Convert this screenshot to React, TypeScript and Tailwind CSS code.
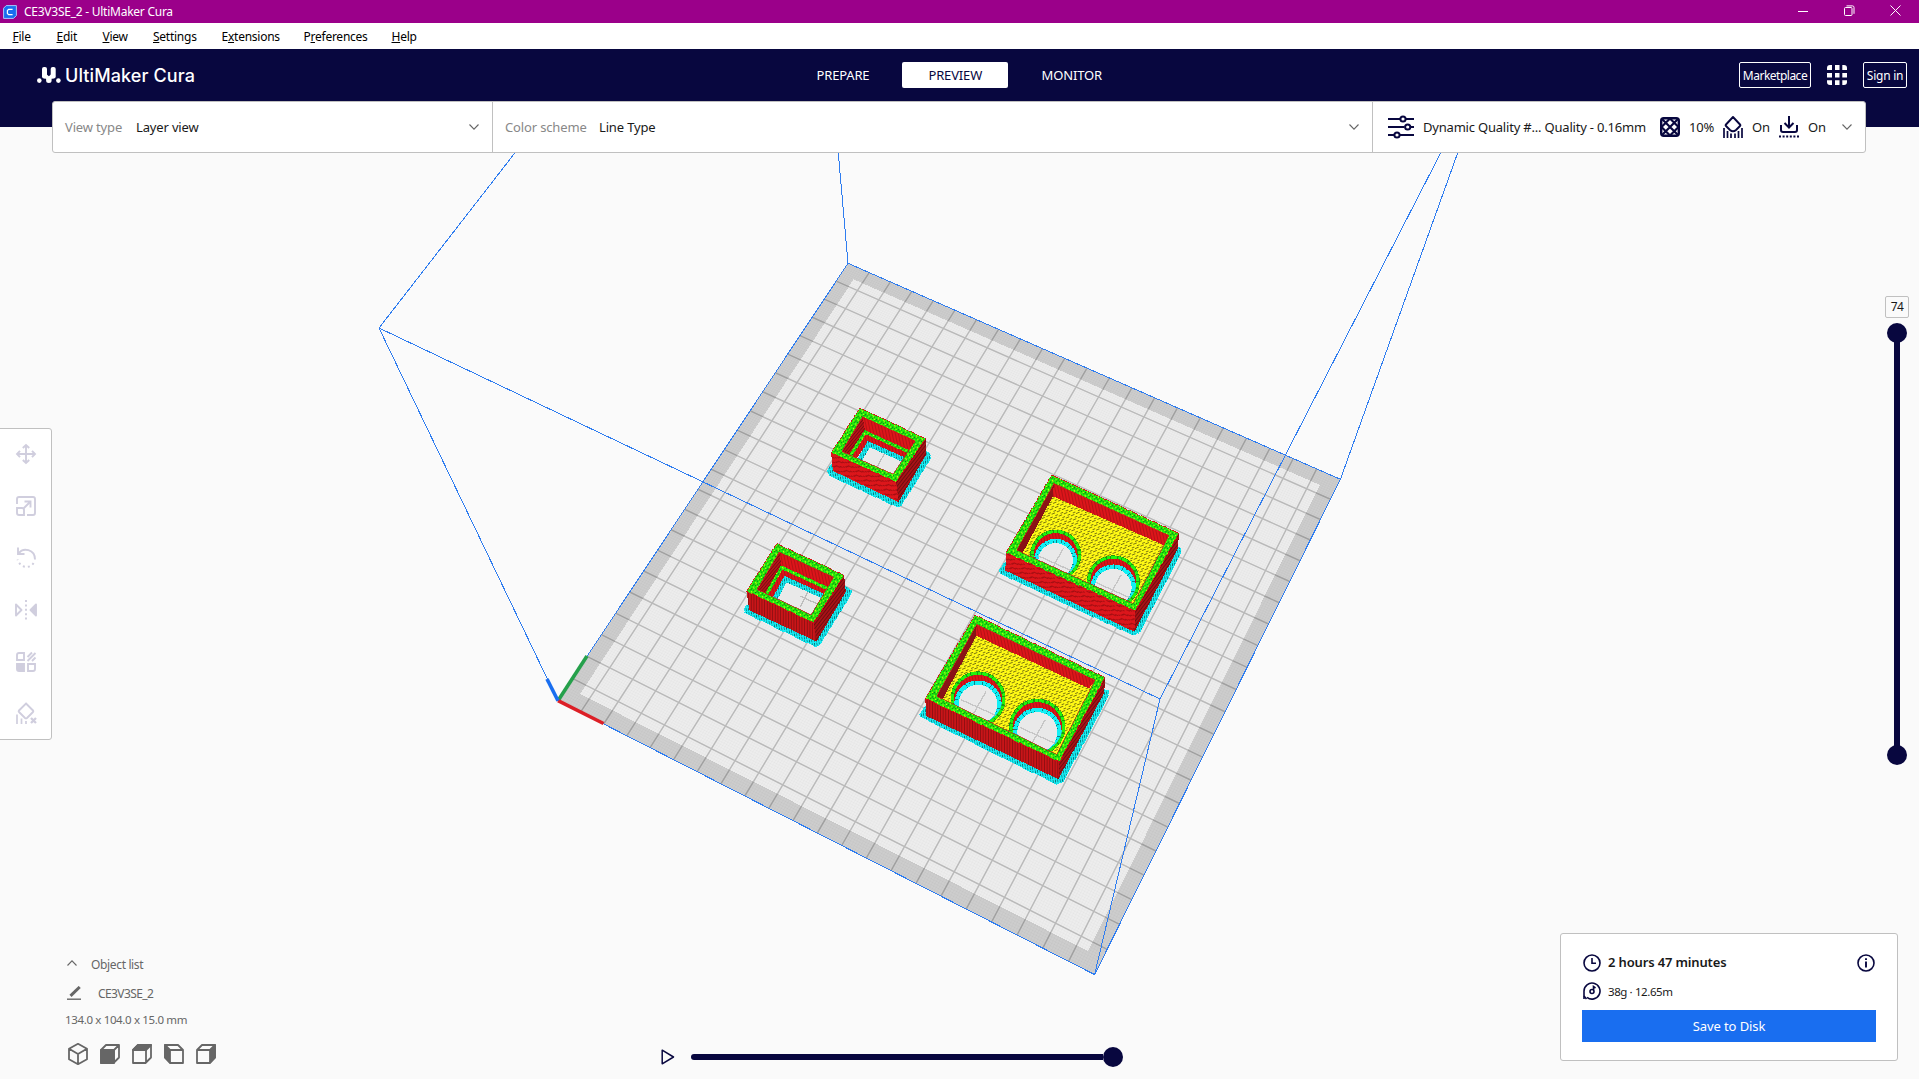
import React from "react";

type Pt = [number, number];

/* ---------- Build plate projection ---------- */

const ORIGIN: Pt = [557.7, 700.5];
const X_END: Pt = [1094.6, 974.6];
const FAR: Pt = [1340.4, 479.3];
const Y_END: Pt = [848, 263.3];

// Projective mapping of the unit square onto the plate's four screen corners.
const dx1 = X_END[0] - FAR[0];
const dx2 = Y_END[0] - FAR[0];
const sx = ORIGIN[0] - X_END[0] + FAR[0] - Y_END[0];
const dy1 = X_END[1] - FAR[1];
const dy2 = Y_END[1] - FAR[1];
const sy = ORIGIN[1] - X_END[1] + FAR[1] - Y_END[1];
const det = dx1 * dy2 - dx2 * dy1;
const g = (sx * dy2 - dx2 * sy) / det;
const h = (dx1 * sy - sx * dy1) / det;

function project(u: number, v: number): Pt {
  const w = g * u + h * v + 1;
  const x = (X_END[0] * (1 + g) - ORIGIN[0]) * u + (Y_END[0] * (1 + h) - ORIGIN[0]) * v + ORIGIN[0];
  const y = (X_END[1] * (1 + g) - ORIGIN[1]) * u + (Y_END[1] * (1 + h) - ORIGIN[1]) * v + ORIGIN[1];
  return [x / w, y / w];
}

function gridPath(divisions: number): string {
  let d = "";
  for (let i = 1; i < divisions; i++) {
    const t = i / divisions;
    const [a, b, c, e] = [project(t, 0), project(t, 1), project(0, t), project(1, t)];
    d += `M${a[0].toFixed(1)} ${a[1].toFixed(1)}L${b[0].toFixed(1)} ${b[1].toFixed(1)}`;
    d += `M${c[0].toFixed(1)} ${c[1].toFixed(1)}L${e[0].toFixed(1)} ${e[1].toFixed(1)}`;
  }
  return d;
}

const coarseGrid = gridPath(22);
const fineGrid = gridPath(220);
const platePoints = [ORIGIN, X_END, FAR, Y_END].map((p) => p.join(",")).join(" ");

/* ---------- Sliced parts (drawn in a 3x local space) ---------- */

function Ring({ outer, inner }: { outer: string; inner: string }) {
  return (
    <>
      <path d={`M${outer}ZM${inner}Z`} fill="url(#skin)" fillRule="evenodd" />
      <path d={`M${outer}Z`} fill="none" stroke="#d41414" strokeWidth="3" strokeDasharray="4 2" />
      <path d={`M${inner}Z`} fill="none" stroke="#c81212" strokeWidth="2" />
    </>
  );
}

function SmallFrame({
  x, y, id, brim, front, side, outer, inner, backWall, ledge, lowWall, cyan, hole, gridLine, stripe,
}: {
  x: number; y: number; id: string; brim: string; front: string; side: string; outer: string; inner: string;
  backWall: string; ledge: string; lowWall: string; cyan: string; hole: string; gridLine: string; stripe: string;
}) {
  return (
    <g transform={`translate(${x} ${y}) scale(0.33333)`}>
      <clipPath id={id}><path d={`M${inner}Z`} /></clipPath>
      <path d={`M${brim}Z`} fill="url(#brim)" stroke="#12e4ee" strokeWidth="3" strokeDasharray="4 3" />
      <path d={`M${front}Z`} fill={stripe} />
      <path d={`M${side}Z`} fill="url(#sideWall)" />
      <g clipPath={`url(#${id})`}>
        <path d={`M${inner}Z`} fill="url(#darkWall)" />
        <path d={`M${backWall}Z`} fill="url(#redWall)" />
        <path d={`M${lowWall}`} fill="none" stroke="url(#redWall)" strokeWidth="24" />
        <path d={`M${hole}Z`} fill="#e9e9e9" />
        <path d={`M${gridLine}`} stroke="#bdbdbd" strokeWidth="4" />
        <path d={`M${cyan}`} fill="none" stroke="url(#brim)" strokeWidth="15" />
        <path d={`M${ledge}`} fill="none" stroke="url(#skin)" strokeWidth="10" />
      </g>
      <Ring outer={outer} inner={inner} />
    </g>
  );
}

type Bore = { cx: number; cy: number; r: number };

function LargeTray({
  x, y, id, brim, front, side, outer, inner, backWall, leftWall, bores, stripe,
}: {
  x: number; y: number; id: string; brim: string; front: string; side: string; outer: string; inner: string;
  backWall: string; leftWall: string; bores: Bore[]; stripe: string;
}) {
  return (
    <g transform={`translate(${x} ${y}) scale(0.33333)`}>
      <clipPath id={id}><path d={`M${inner}Z`} /></clipPath>
      <path d={`M${brim}Z`} fill="url(#brim)" stroke="#12e4ee" strokeWidth="3" strokeDasharray="4 3" />
      <path d={`M${front}Z`} fill={stripe} />
      <path d={`M${side}Z`} fill="url(#sideWall)" />
      <g clipPath={`url(#${id})`}>
        <path d={`M${inner}Z`} fill="url(#floor)" />
        <path d={`M${backWall}Z`} fill="url(#redWall)" />
        <path d={`M${leftWall}Z`} fill="#8a1216" />
        {bores.map((b, i) => (
          <g key={i}>
            <clipPath id={`${id}-bore-${i}`}><circle cx={b.cx} cy={b.cy} r={b.r - 9} /></clipPath>
            <circle cx={b.cx} cy={b.cy} r={b.r - 5} fill="none" stroke="#1c9a10" strokeWidth="11" />
            <circle cx={b.cx} cy={b.cy} r={b.r - 5} fill="none" stroke="#22f30c" strokeWidth="9" strokeDasharray="17 5 9 3" />
            <circle cx={b.cx} cy={b.cy} r={b.r - 10} fill="url(#redWall)" />
            <g clipPath={`url(#${id}-bore-${i})`}>
              <circle cx={b.cx} cy={b.cy + 16} r={b.r - 12} fill="#0a8288" />
              <circle cx={b.cx} cy={b.cy + 16} r={b.r - 18} fill="none" stroke="#12f0f5" strokeWidth="14" strokeDasharray="13 2 9 1" />
              <circle cx={b.cx} cy={b.cy + 16} r={b.r - 24} fill="#e9e9e9" />
              <path
                d={`M${b.cx - 52} ${b.cy + 2}l106 48M${b.cx + 24} ${b.cy - 22}l-46 82`}
                stroke="#bdbdbd" strokeWidth="4" opacity="0.8"
              />
            </g>
          </g>
        ))}
      </g>
      <Ring outer={outer} inner={inner} />
    </g>
  );
}

function Scene() {
  return (
    <svg className="absolute inset-0 h-full w-full" viewBox="0 0 1919 1079" shapeRendering="crispEdges">
      <defs>
        <pattern id="skin" width="18" height="15" patternUnits="userSpaceOnUse" patternTransform="rotate(25)">
          <rect width="18" height="15" fill="#20f00c" />
          <path d="M0 1h3v3h-3zM9 4h3v3h-3zM4 9h3v3h-3zM13 11h3v3h-3z" fill="#0e7012" />
          <path d="M5 1h3v3h-3zM14 6h3v3h-3zM0 8h3v3h-3z" fill="#e4f510" />
          <path d="M12 0h3v3h-3z" fill="#0fa00e" />
        </pattern>
        <pattern id="floor" width="17" height="14" patternUnits="userSpaceOnUse" patternTransform="rotate(-24)">
          <rect width="17" height="14" fill="#fff914" />
          <path d="M0 1h10v2.400h-10zM8 8h9v2.400h-9z" fill="#77720f" />
        </pattern>
        <pattern id="redWall" width="9" height="30" patternUnits="userSpaceOnUse" patternTransform="rotate(-12)">
          <rect width="9" height="30" fill="#dd151a" />
          <rect width="3" height="30" fill="#b51116" />
        </pattern>
        <pattern id="frontCurve" width="33" height="60" patternUnits="userSpaceOnUse" patternTransform="rotate(25)">
          <rect width="33" height="60" fill="#dc161b" />
          <path d="M0 12Q22 8 33-4M0 27Q22 22 33 11M0 42Q22 37 33 26M0 57Q22 52 33 41" fill="none" stroke="#a50e12" strokeWidth="3.5" />
        </pattern>
        <pattern id="frontStripe" width="8" height="30" patternUnits="userSpaceOnUse">
          <rect width="8" height="30" fill="#c91518" />
          <rect width="3.5" height="30" fill="#8e0f12" />
        </pattern>
        <pattern id="sideWall" width="30" height="8" patternUnits="userSpaceOnUse" patternTransform="rotate(-52)">
          <rect width="30" height="8" fill="#a81216" />
          <rect width="30" height="3.5" fill="#6c0c0f" />
        </pattern>
        <pattern id="darkWall" width="7" height="30" patternUnits="userSpaceOnUse" patternTransform="rotate(40)">
          <rect width="7" height="30" fill="#b51318" />
          <rect width="3" height="30" fill="#780c10" />
        </pattern>
        <pattern id="brim" width="7" height="12" patternUnits="userSpaceOnUse" patternTransform="rotate(-8)">
          <rect width="7" height="12" fill="#18eef4" />
          <path d="M0 0h2.500v8h-2.500z" fill="#066f75" />
        </pattern>
      </defs>

      <polygon points={platePoints} fill="#cdcdcd" />
      <polygon points="580,694 853.6,279.3 1320,485 1088,951" fill="#ededed" />
      <path d={fineGrid} stroke="#000" strokeOpacity="0.026" strokeWidth="0.8" shapeRendering="geometricPrecision" />
      <path d={coarseGrid} stroke="#000" strokeOpacity="0.2" strokeWidth="1.5" shapeRendering="geometricPrecision" />

      <g stroke="#2f7df0" strokeWidth="1" fill="none">
        <polygon points={platePoints} />
        <path d="M379 328L535 127M379 328L557.700 700.500M379 328L1160 699M1160 699L1094.600 974.600M1160 699L1454 127M1340.400 479.300L1467 127M836 127L848 263.300" />
      </g>
      <g strokeWidth="3.6" fill="none" shapeRendering="geometricPrecision">
        <path d="M558 700.700L587 656" stroke="#25a04b" />
        <path d="M558 700.700L603.500 723.500" stroke="#dc1f26" />
        <path d="M558 700.700L547 679" stroke="#196ef0" />
      </g>

      <SmallFrame
        x={799.5} y={389.5} id="frame-a" stripe="url(#frontCurve)"
        brim="84 244L94 226L380 184L394 196L391 211L304 350L293 353L88 257"
        front="95 190L290 276L297 338L100 244"
        side="290 276L378 147L380 195L297 338"
        outer="181 55L378 147L290 277L95 190"
        inner="189 82L347 154L281 254L127 186"
        backWall="189 82L347 154L325 190L198 130"
        lowWall="160 212L204 145L325 202"
        cyan="178 215L208 164L325 216"
        hole="204 160L325 214L285 262L168 212"
        gridLine="262 180L228 240"
        ledge="152 200L197 128L330 188"
      />
      <SmallFrame
        x={529.5} y={529.5} id="frame-b" stripe="url(#frontStripe)"
        brim="643 240L652 226L950 172L967 184L960 203L870 347L856 351L647 251"
        front="651 185L852 279L861 336L659 242"
        side="852 279L944 137L949 187L861 336"
        outer="742 42L944 137L852 280L651 185"
        inner="749 68L912 143L845 256L683 180"
        backWall="749 68L912 143L890 180L757 115"
        lowWall="722 205L765 131L892 192"
        cyan="738 205L768 149L892 205"
        hole="768 148L890 200L845 262L728 205"
        gridLine="838 180L812 232M812 200L870 226"
        ledge="710 196L757 114L900 180"
      />
      <LargeTray
        x={990} y={459.5} id="tray-a" stripe="url(#frontCurve)"
        brim="28 332L42 310L555 258L573 266L572 282L448 520L428 527L33 344"
        front="48 280L436 455L433 517L46 333"
        side="436 455L567 221L564 267L433 517"
        outer="185 46L567 221L436 455L48 280"
        inner="192 72L537 228L430 432L80 272"
        backWall="192 72L537 228L524 258L188 110"
        leftWall="192 72L188 112L97 282L80 272"
        bores={[{ cx: 197, cy: 287, r: 76 }, { cx: 370, cy: 367, r: 79 }]}
      />
      <LargeTray
        x={900} y={599.5} id="tray-b" stripe="url(#frontStripe)"
        brim="59 345L76 320L606 268L626 274L625 292L489 548L468 554L63 353"
        front="76 297L478 487L475 539L78 349"
        side="478 487L615 234L613 279L475 539"
        outer="225 46L615 234L478 487L76 297"
        inner="230 75L585 242L470 465L110 290"
        backWall="230 75L585 242L567 267L228 108"
        leftWall="230 75L228 110L128 299L110 290"
        bores={[{ cx: 234, cy: 298, r: 82 }, { cx: 412, cy: 382, r: 84 }]}
      />
    </svg>
  );
}

/* ---------- Icons ---------- */

function Chevron({ up = false, className = "" }: { up?: boolean; className?: string }) {
  return (
    <svg viewBox="0 0 10 10" className={`h-[10px] w-[10px] shrink-0 ${className}`} fill="none" stroke="#666" strokeWidth="1.1">
      <path d={up ? "M0.5 7.5L5 2.8L9.5 7.5" : "M0.5 2.5L5 7.2L9.5 2.5"} />
    </svg>
  );
}

function Tool({ children }: { children: React.ReactNode }) {
  return (
    <svg viewBox="0 0 20 20" className="h-5 w-5 overflow-visible" fill="none" stroke="#d0cede" strokeWidth="1.9">
      {children}
    </svg>
  );
}

function Cube({ children }: { children: React.ReactNode }) {
  return (
    <svg viewBox="0 0 20 20" className="h-5 w-5 overflow-visible" fill="none" stroke="#666" strokeWidth="1.8" strokeLinejoin="round">
      {children}
    </svg>
  );
}

const NAVY = "#08073f";

function Mark() {
  return (
    <svg viewBox="0 0 24 16" className="h-4 w-6" fill="#fff">
      <circle cx="2.300" cy="13.600" r="2.300" />
      <circle cx="21.400" cy="13.600" r="2.300" />
      <rect x="5" y="0" width="5" height="11.500" rx="2" />
      <rect x="13.700" y="0" width="5" height="11.500" rx="2" />
      <path d="M5.500 9.500L9.800 7.500L11.850 9.200L13.900 7.500L18.200 9.500Q17.500 11.500 14.600 11.800V13.500a2.750 2.500 0 0 1-5.500 0V11.800Q6.200 11.500 5.500 9.500z" />
    </svg>
  );
}

/* ---------- Page ---------- */

const MENU: [string, string, string, string][] = [
  ["", "F", "ile", "w-[44px]"],
  ["", "E", "dit", "w-[46px]"],
  ["", "V", "iew", "w-[50.5px]"],
  ["", "S", "ettings", "w-[68.5px]"],
  ["E", "x", "tensions", "w-[82px]"],
  ["P", "r", "eferences", "w-[88px]"],
  ["", "H", "elp", "w-[50px]"],
];

export default function App() {
  return (
    <div className="relative flex h-[1079px] w-[1919px] flex-col overflow-hidden bg-[#fafafa] font-['Noto_Sans',sans-serif] text-[#191919]">
      <Scene />

      <div className="relative flex h-[23px] shrink-0 items-center justify-between bg-[#9b008a] text-white">
        <div className="flex items-center gap-[7px] pl-[3px]">
          <svg viewBox="0 0 14 14" className="h-[14px] w-[14px]">
            <path d="M3.2.6H13.4V10.5L10.5 13.4H.6V3.2z" fill="#196ef0" stroke="#a9c8fb" strokeWidth="1" />
            <path d="M9.6 4.400H5.600L4.400 5.600V8.400L5.600 9.600H9.600" fill="none" stroke="#fff" strokeWidth="1.200" />
          </svg>
          <span className="text-[12px] leading-none tracking-[-0.25px]">CE3V3SE_2 - UltiMaker Cura</span>
        </div>
        <div className="flex gap-[35px] pr-[18px] pb-[3px]">
          <svg viewBox="0 0 11 11" className="h-[11px] w-[11px]" stroke="#fff"><path d="M0 6.500H10" /></svg>
          <svg viewBox="0 0 11 11" className="h-[11px] w-[11px]" stroke="#fff" fill="none">
            <rect x=".5" y="2.500" width="7.500" height="8" rx="1" />
            <path d="M2.500.9H8.500Q10 .9 10 2.400V8.800" />
          </svg>
          <svg viewBox="0 0 11 11" className="h-[11px] w-[11px]" stroke="#fff"><path d="M.5.5L10.500 10.500M10.500.5L.5 10.500" /></svg>
        </div>
      </div>

      <nav className="relative flex h-[26px] shrink-0 items-center bg-white pl-[12.500px] text-[12px] leading-none tracking-[-0.25px] text-black">
        {MENU.map(([pre, key, post, width]) => (
          <span key={pre + key + post} className={`shrink-0 pt-px whitespace-nowrap ${width}`}>
            {pre}<span className="underline underline-offset-1">{key}</span>{post}
          </span>
        ))}
      </nav>

      <header className="relative h-[78px] shrink-0 bg-[#08073f] text-white">
        <div className="grid h-[52px] grid-cols-[1fr_auto_1fr] items-center">
          <div className="flex items-center gap-1 pl-[37px]">
            <Mark />
            <span className="pt-[2px] font-['Inter',sans-serif] text-[18px] leading-none font-medium tracking-[0.1px]">UltiMaker Cura</span>
          </div>
          <div className="flex h-[26px] gap-[7px] text-[13px] tracking-[-0.15px]">
            <button className="rounded-[2px] px-[26px] pt-px">PREPARE</button>
            <button className="rounded-[2px] bg-white px-[26px] pt-px text-[#08073f]">PREVIEW</button>
            <button className="rounded-[2px] px-[26.500px] pt-px">MONITOR</button>
          </div>
          <div className="flex items-center justify-end gap-4 pr-3 text-[12px]">
            <button className="h-[26px] w-[72px] rounded-[2px] border border-white pt-px leading-none tracking-[-0.5px]">Marketplace</button>
            <svg viewBox="0 0 20 20" className="h-5 w-5" fill="#fff">
              <path d="M5 0v5H0V3q0-3 3-3zM8 0h4.500v5H8zM15.300 0H17q3 0 3 3v2h-4.700zM0 8h5v4.500H0zM8 8h4.500v4.500H8zM15.300 8H20v4.500h-4.700zM0 15.300h5V20H3q-3 0-3-3zM8 15.300h4.500V20H8zM15.300 15.300H20V17q0 3-3 3h-1.700z" />
            </svg>
            <button className="h-[26px] w-[44px] rounded-[2px] border border-white pt-px leading-none tracking-[-0.25px] whitespace-nowrap">Sign in</button>
          </div>
        </div>
      </header>

      <div className="relative z-10 -mt-[26px] mr-[53px] ml-[52px] flex h-[52px] shrink-0 rounded-[3px] border border-[#c0c0c0] bg-white text-[13px] leading-none tracking-[-0.15px]">
        <div className="flex w-[440px] items-center border-r border-[#c0c0c0] pr-[13px] pl-3">
          <span className="w-[71px] text-[#888]">View type</span>
          <span>Layer view</span>
          <Chevron className="ml-auto" />
        </div>
        <div className="flex w-[880px] items-center border-r border-[#c0c0c0] pr-[13px] pl-3">
          <span className="w-[94px] text-[#888]">Color scheme</span>
          <span>Line Type</span>
          <Chevron className="ml-auto" />
        </div>
        <div className="flex flex-1 items-center pr-[13px] pl-[15px]">
          <svg viewBox="0 0 26 24" className="mr-[9px] h-6 w-[26px]" fill="none" stroke={NAVY} strokeWidth="2">
            <path d="M0 4H12M18 4H26M0 12H16.500M23 12H26M0 20H6M12 20H26" />
            <circle cx="15" cy="4" r="2.600" /><circle cx="19.700" cy="12" r="2.600" /><circle cx="9" cy="20" r="2.600" />
          </svg>
          <span className="w-[237px] tracking-[-0.2px] whitespace-nowrap">Dynamic Quality #... Quality - 0.16mm</span>
          <svg viewBox="0 0 20 20" className="mr-[9px] h-5 w-5" fill="none" stroke={NAVY}>
            <rect x="1.200" y="1.200" width="17.600" height="17.600" rx="2.500" strokeWidth="2.400" />
            <path d="M2 2L18 18M18 2L2 18M10 1.500L18.500 10L10 18.500L1.500 10z" strokeWidth="2.200" />
          </svg>
          <span className="w-[34px]">10%</span>
          <svg viewBox="0 0 20 22" className="mr-[9px] h-[22px] w-5" fill="none" stroke={NAVY} strokeWidth="1.900">
            <path d="M10 1L17 8.500Q17.700 9.300 17 10L13 14Q10 16.500 7 14L3 10Q2.300 9.300 3 8.500z" strokeLinejoin="round" />
            <path d="M1 12V22M4.500 15V22M8 17.500V22M12 17.500V22M15.500 15V22M19 12V22" strokeWidth="1.700" />
          </svg>
          <span className="w-[27px]">On</span>
          <svg viewBox="0 0 20 22" className="mr-[9px] h-[22px] w-5" fill="none" stroke={NAVY} strokeWidth="2">
            <path d="M10 0V11M5.500 7L10 11.500L14.500 7M2 9V14Q2 16 4 16H16Q18 16 18 14V9" />
            <path d="M0 20.500H20" strokeDasharray="2 1.600" />
          </svg>
          <span>On</span>
          <Chevron className="ml-auto" />
        </div>
      </div>

      <main className="relative flex min-h-0 flex-1 justify-between">
        <div className="flex w-[300px] flex-col">
          <div className="mt-[275px] -ml-1 flex h-[312px] w-[56px] shrink-0 flex-col items-center gap-8 rounded-[3px] border border-[#c0c0c0] bg-white pt-[15px] pl-1">
            <Tool>
              <path d="M10 1V19M1 10H19M6.800 4L10 1L13.200 4M6.800 16L10 19L13.200 16M4 6.800L1 10L4 13.200M16 6.800L19 10L16 13.200" />
            </Tool>
            <Tool>
              <path d="M1 8V3Q1 1 3 1H17Q19 1 19 3V17Q19 19 17 19H11M1 12H6Q8 12 8 14V19H3Q1 19 1 17zM8 12L14.500 5.500M8.500 5.500H14.500V11.500" />
            </Tool>
            <Tool>
              <path d="M2-.5V6H8.500M2.500 5.500C7-1 19 1 19 11.500" />
              <path d="M17.500 15C15 20 5 21.500 1.500 11.500" strokeDasharray="2 3" />
            </Tool>
            <Tool>
              <path d="M0 4.500V15.500L5.500 10z" strokeLinejoin="round" />
              <path d="M20 4.500V15.500L14.500 10z" fill="#d0cede" strokeLinejoin="round" />
              <path d="M10 0V20" strokeDasharray="2 2.400" />
            </Tool>
            <Tool>
              <path d="M3 1H8V8H1V3Q1 1 3 1zM12 12H19V17Q19 19 17 19H12z" />
              <path d="M1 12H8V19H3Q1 19 1 17z" fill="#d0cede" />
              <path d="M11.500 5L16 .5M11.500 9L19.500 1M16 9L19.500 5.500" />
            </Tool>
            <Tool>
              <path d="M10-.5L17 6.500Q17.700 7.300 17 8L11 14Q10 14.700 9 14L3 8Q2.300 7.300 3 6.500z" />
              <path d="M1 10.500V20M5.500 14.500V20M10 17V20" strokeWidth="1.700" />
              <path d="M15 14L20 19M20 14L15 19" strokeWidth="2.300" />
            </Tool>
          </div>

          <div className="mt-auto flex flex-col pl-[65px] text-[12px] leading-none text-[#666]">
            <div className="flex h-[16px] items-center gap-[14px] pl-[2px]">
              <Chevron up />
              <span className="pt-[3px] tracking-[-0.35px]">Object list</span>
            </div>
            <div className="mt-[13px] flex h-[18px] items-center gap-[17px] pl-[2px]">
              <svg viewBox="0 0 14 14" className="h-[14px] w-[14px]" fill="none" stroke="#666">
                <path d="M3.500 9.800L12.700 1" strokeWidth="3" /><path d="M0 13.200H14" strokeWidth="1.400" />
              </svg>
              <span className="pt-[2px] tracking-[-0.6px]">CE3V3SE_2</span>
            </div>
            <div className="mt-[10px] h-4 text-[11.500px] leading-4 tracking-[-0.35px]">134.0 x 104.0 x 15.0 mm</div>
            <div className="mt-4 mb-[15px] flex gap-3 pl-[3px]">
              <Cube><path d="M10-.2L19 4.800V15.200L10 20.200L1 15.200V4.800zM1.500 5L10 10L18.500 5M10 10V20" /></Cube>
              <Cube><path d="M1 6L6 1H19V13.500L13.500 19H1zM14 6L19 1M14 6V19" /><path d="M1 6H14V19H1z" fill="#666" /></Cube>
              <Cube><path d="M1 6L6 1H19V13.500L13.500 19H1zM14 6V19" /><path d="M1 6L6 1H19L14 6z" fill="#666" /></Cube>
              <Cube><path d="M19 6L14 1H1V13.500L6.500 19H19zM19 6H6" /><path d="M6 6L1 1V13.500L6 19z" fill="#666" /></Cube>
              <Cube><path d="M1 6L6 1H19V13.500L13.500 19H1zM1 6H14" /><path d="M14 6L19 1V13.500L14 19z" fill="#666" /></Cube>
            </div>
          </div>
        </div>

        <div className="mr-[76px] flex items-center self-end pb-3">
          <svg viewBox="0 0 14 16" className="mr-[16px] h-4 w-[14px]" fill="none" stroke={NAVY} strokeWidth="1.500">
            <path d="M1.200 1.200V14.800L12.500 8z" strokeLinejoin="round" />
          </svg>
          <div className="h-[6px] w-[412px] rounded-l-full bg-[#08073f]" />
          <div className="h-5 w-5 rounded-full bg-[#08073f]" />
        </div>

        <div className="flex w-[359px] flex-col">
          <div className="mt-[143px] mr-[10px] flex w-[24px] flex-col items-center self-end">
            <div className="flex h-[22px] w-[24px] items-center justify-center rounded-[2px] border border-[#c0c0c0] bg-[#fafafa] text-[12px] leading-none tracking-[-0.5px]">74</div>
            <div className="mt-[5px] h-5 w-5 rounded-full bg-[#08073f]" />
            <div className="-my-px h-[404px] w-[6px] bg-[#08073f]" />
            <div className="h-5 w-5 rounded-full bg-[#08073f]" />
          </div>
          <section className="mt-auto mb-[18px] h-[128px] w-[338px] rounded-[3px] border border-[#c0c0c0] bg-white px-[21px] pt-[18px]">
            <div className="flex h-[21px] items-center gap-[7px] pl-px">
              <svg viewBox="0 0 18 18" className="h-[18px] w-[18px]" fill="none" stroke={NAVY} strokeWidth="1.600">
                <circle cx="9" cy="9" r="8" /><path d="M9 4V9.200H13" />
              </svg>
              <span className="text-[13px] leading-none font-semibold tracking-[-0.15px]">2 hours 47 minutes</span>
              <svg viewBox="0 0 18 18" className="mr-px ml-auto h-[18px] w-[18px]" fill="none" stroke={NAVY} strokeWidth="1.600">
                <circle cx="9" cy="9" r="8" /><path d="M9 7.500V13.500M9 4.300V6" strokeWidth="1.900" />
              </svg>
            </div>
            <div className="mt-[9px] flex h-[18px] items-center gap-[7px] pl-px">
              <svg viewBox="0 0 18 18" className="h-[18px] w-[18px]" fill="none" stroke={NAVY} strokeWidth="1.600">
                <path d="M1 17V9A8 8 0 1 1 4 15.300" /><circle cx="9" cy="9.500" r="2" /><path d="M10.500 8V4.500L12.500 6" /><path d="M1 14L3.500 17" />
              </svg>
              <span className="pt-[2px] text-[11.500px] leading-none tracking-[-0.4px]">38g · 12.65m</span>
            </div>
            <button className="mt-[10px] block h-8 w-[294px] bg-[#196ef0] pt-px text-[13px] tracking-[-0.1px] text-white">Save to Disk</button>
          </section>
        </div>
      </main>
    </div>
  );
}
